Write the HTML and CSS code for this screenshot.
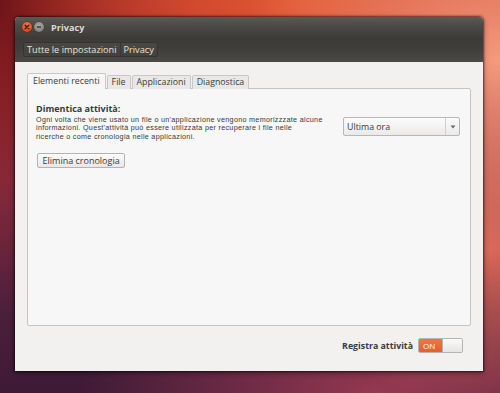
FILE: index.html
```html
<!DOCTYPE html>
<html lang="it">
<head>
<meta charset="utf-8">
<title>Privacy</title>
<link rel="stylesheet" href="styles.css">
</head>
<body>
<div class="window">
  <div class="titlebar">
    <span class="wbtn close"><svg viewBox="0 0 10 10" width="10" height="10"><path d="M3.2 3.2 L6.8 6.8 M6.8 3.2 L3.2 6.8" stroke="#3a1a10" stroke-width="1.4" stroke-linecap="round"/></svg></span>
    <span class="wbtn mini"><svg viewBox="0 0 10 10" width="10" height="10"><path d="M3 5 H7" stroke="#3c3b37" stroke-width="1.3"/></svg></span>
    <span class="wtitle">Privacy</span>
  </div>
  <div class="toolbar">
    <div class="crumbs">
      <span class="crumb">Tutte le impostazioni</span>
      <span class="crumb">Privacy</span>
    </div>
  </div>
  <div class="content">
    <div class="tabs">
      <span class="tab active">Elementi recenti</span>
      <span class="tab">File</span>
      <span class="tab">Applicazioni</span>
      <span class="tab">Diagnostica</span>
    </div>
    <div class="panel">
      <div class="heading">Dimentica attività:</div>
      <div class="row">
        <div class="left">
          <p class="desc"><span class="line">Ogni volta che viene usato un file o un'applicazione vengono memorizzzate alcune</span><span class="line">informazioni. Quest'attività può essere utilizzata per recuperare i file nelle</span><span class="line">ricerche o come cronologia nelle applicazioni.</span></p>
          <span class="button">Elimina cronologia</span>
        </div>
        <div class="combo">
          <span class="combo-label">Ultima ora</span>
          <span class="combo-arrow"><svg viewBox="0 0 6 4" width="6" height="4"><path d="M0.5 0.5 H5.5 L3 3.5 Z" fill="#6a6a6a"/></svg></span>
        </div>
      </div>
    </div>
    <div class="footer">
      <span class="footer-label">Registra attività</span>
      <span class="switch"><span class="switch-on">ON</span><span class="switch-knob"></span></span>
    </div>
  </div>
</div>
</body>
</html>
```
FILE: styles.css
```css
html, body {
  margin: 0;
  padding: 0;
}
body {
  width: 500px;
  height: 393px;
  overflow: hidden;
  font-family: "Open Sans", "Noto Sans", "DejaVu Sans", sans-serif;
  background:
    radial-gradient(ellipse 260px 200px at 500px 60px, rgba(248,160,130,0.95), rgba(248,160,130,0) 100%),
    radial-gradient(ellipse 200px 160px at 490px 250px, rgba(230,110,90,0.9), rgba(230,110,90,0) 100%),
    radial-gradient(ellipse 300px 120px at 300px 0px, rgba(228,90,50,0.95), rgba(228,90,50,0) 100%),
    radial-gradient(ellipse 200px 200px at 0px 0px, rgba(110,20,25,1), rgba(110,20,25,0) 100%),
    radial-gradient(ellipse 300px 120px at 380px 393px, rgba(160,60,85,0.9), rgba(160,60,85,0) 100%),
    linear-gradient(180deg, #b6302a 0%, #8a2a3a 45%, #4a1f3c 80%, #3e1a36 100%);
}
.window {
  margin: 17px 0 0 15px;
  width: 468px;
  height: 354px;
  border-radius: 4px 4px 0 0;
  overflow: hidden;
  display: flex;
  flex-direction: column;
  box-shadow: 0 0 2px 1px rgba(0,0,0,0.55), 0 2px 6px rgba(0,0,0,0.35);
  background: #f2f1f0;
}
.titlebar {
  height: 20px;
  display: flex;
  align-items: center;
  padding-left: 7px;
  background: linear-gradient(180deg, #5a5954 0%, #4b4a46 45%, #3e3d39 100%);
}
.wbtn {
  width: 10px;
  height: 10px;
  border-radius: 50%;
  display: flex;
  align-items: center;
  justify-content: center;
  margin-right: 1.5px;
}
.close {
  background: radial-gradient(circle at 50% 35%, #f4805a, #e0481e 70%, #c23b18);
  box-shadow: 0 0 0 0.5px #5a2a18;
}
.mini {
  background: radial-gradient(circle at 50% 35%, #a9a8a2, #85847f 70%, #6e6d68);
  box-shadow: 0 0 0 0.5px #3a3935;
}
.wtitle {
  margin-left: 6px;
  color: #dfdbd2;
  font-weight: 700;
  font-size: 9px;
  letter-spacing: 0.1px;
}
.toolbar {
  height: 25px;
  display: flex;
  align-items: center;
  padding-left: 8px;
  background: linear-gradient(180deg, #3c3b37 0%, #3e3d39 40%, #4a4945 100%);
}
.crumbs {
  display: flex;
  height: 15px;
  border: 1px solid #353430;
  border-radius: 2px;
  background: linear-gradient(180deg, #494844, #42413d);
  box-sizing: border-box;
}
.crumb {
  color: #e6e2da;
  font-size: 9.2px;
  line-height: 13px;
  padding: 0 3px 0 3px;
}
.crumb + .crumb {
  border-left: 1px solid #393834;
}
.content {
  flex: 1;
  display: flex;
  flex-direction: column;
  padding: 12px 12px 0 12px;
  color: #3c3c3c;
}
.tabs {
  display: flex;
  align-items: flex-end;
  height: 15px;
  margin-bottom: -1px;
  position: relative;
  z-index: 1;
}
.tab {
  font-size: 8.8px;
  line-height: 12px;
  height: 13px;
  padding: 0 4px;
  border: 1px solid #c9c8c6;
  border-bottom: none;
  background: #e9e8e6;
  color: #3c3c3c;
  margin-right: 1px;
  border-radius: 2px 2px 0 0;
}
.tab.active {
  height: 15px;
  line-height: 14px;
  background: #f7f7f7;
  padding: 0 5px;
}
.panel {
  height: 238px;
  box-sizing: border-box;
  border: 1px solid #c5c4c2;
  border-radius: 0 2px 2px 2px;
  background: #f7f7f7;
  padding: 14px 10px 0 8px;
}
.heading {
  font-weight: 700;
  font-size: 9px;
  line-height: 11px;
  color: #3a3a3a;
}
.row {
  display: flex;
  align-items: flex-start;
}
.left {
  flex: 1;
}
.desc {
  margin: 2px 0 0 0;
  font-family: "Liberation Sans", Arial, sans-serif;
  font-size: 7.2px;
  line-height: 8.4px;
  letter-spacing: 0.3px;
  color: #383838;
}
.line {
  display: block;
  height: 8.4px;
  white-space: nowrap;
}
.button {
  display: inline-block;
  margin: 12px 0 0 1px;
  height: 15px;
  box-sizing: border-box;
  padding: 0 4.5px;
  font-size: 9px;
  line-height: 13px;
  border: 1px solid #b4b3b1;
  border-radius: 2px;
  background: linear-gradient(180deg, #fbfbfb, #e9e8e7);
  color: #3a3a3a;
}
.combo {
  margin-top: 3px;
  width: 117px;
  height: 19px;
  box-sizing: border-box;
  display: flex;
  align-items: center;
  border: 1px solid #b8b7b5;
  border-radius: 2px;
  background: linear-gradient(180deg, #fcfcfc, #ebeae9);
}
.combo-label {
  flex: 1;
  font-size: 8.8px;
  padding-left: 3px;
  color: #3a3a3a;
}
.combo-arrow {
  width: 13px;
  height: 100%;
  border-left: 1px solid #d0cfcd;
  display: flex;
  align-items: center;
  justify-content: center;
}
.footer {
  display: flex;
  justify-content: flex-end;
  align-items: center;
  margin-top: 12px;
  padding-right: 8px;
}
.footer-label {
  font-weight: 700;
  font-size: 8.8px;
  color: #3a3a3a;
  margin-right: 5px;
}
.switch {
  display: flex;
  width: 45px;
  height: 15px;
  box-sizing: border-box;
  border: 1px solid #b5b4b2;
  border-radius: 2px;
  overflow: hidden;
}
.switch-on {
  width: 23px;
  background: linear-gradient(180deg, #f0763f, #e6602a);
  color: #fff;
  font-size: 8px;
  line-height: 13px;
  padding-left: 4px;
  box-sizing: border-box;
}
.switch-knob {
  flex: 1;
  background: linear-gradient(180deg, #fafafa, #e6e5e4);
  border-left: 1px solid #b5b4b2;
}
```
